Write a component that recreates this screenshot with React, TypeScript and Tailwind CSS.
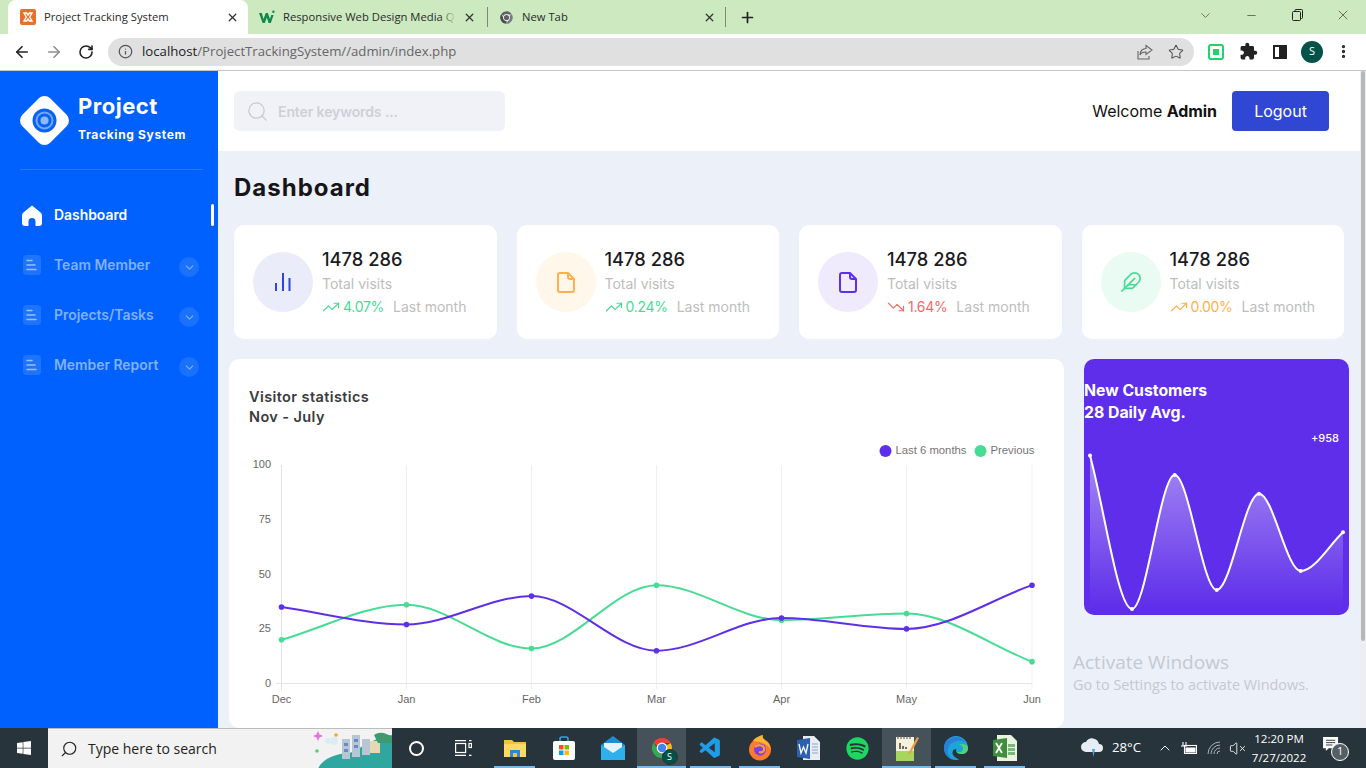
import React from "react";
import { ArrowLeft, ArrowRight, RotateCw, Info, Star, Plus, X, ChevronDown, Minus, TrendingUp, TrendingDown, Feather, EllipsisVertical, ChevronUp, VolumeX, Search } from "lucide-react";
import { MdExtension } from "react-icons/md";
import { FaSpotify, FaWindows } from "react-icons/fa";
import { VscVscode } from "react-icons/vsc";

type P = [number, number];

function monotonePath(pts: P[]) {
  const n = pts.length;
  const d: number[] = [];
  for (let i = 0; i < n - 1; i++) d.push((pts[i + 1][1] - pts[i][1]) / (pts[i + 1][0] - pts[i][0]));
  const m: number[] = pts.map((_, i) => {
    if (i === 0) return d[0];
    if (i === n - 1) return d[n - 2];
    return d[i - 1] * d[i] <= 0 ? 0 : (d[i - 1] + d[i]) / 2;
  });
  for (let i = 0; i < n - 1; i++) {
    if (d[i] === 0) continue;
    const a = m[i] / d[i];
    const b = m[i + 1] / d[i];
    const s = a * a + b * b;
    if (s > 9) {
      const t = 3 / Math.sqrt(s);
      m[i] = a * t * d[i];
      m[i + 1] = b * t * d[i];
    }
  }
  let path = `M${pts[0][0]} ${pts[0][1]}`;
  for (let i = 0; i < n - 1; i++) {
    const h = (pts[i + 1][0] - pts[i][0]) / 3;
    path += ` C${pts[i][0] + h} ${pts[i][1] + m[i] * h} ${pts[i + 1][0] - h} ${pts[i + 1][1] - m[i + 1] * h} ${pts[i + 1][0]} ${pts[i + 1][1]}`;
  }
  return path;
}

const INTER = "font-['Inter',sans-serif]";
const SEGOE = "font-['Open_Sans',sans-serif]";

function ChromeLogo({ size = 16, gray = false }: { size?: number; gray?: boolean }) {
  const c = gray ? ["#5f6368", "#77797c", "#4a4c50"] : ["#ea4335", "#fbbc05", "#34a853"];
  return (
    <svg width={size} height={size} viewBox="0 0 24 24">
      <path d="M12 2a10 10 0 0 1 8.66 5H12a5 5 0 0 0-4.6 3L3.6 6.5A10 10 0 0 1 12 2z" fill={c[0]} />
      <path d="M20.66 7A10 10 0 0 1 12 22l4.3-7.5A5 5 0 0 0 16.4 9.5z" fill={c[1]} />
      <path d="M12 22A10 10 0 0 1 3.6 6.5L7.9 14a5 5 0 0 0 4.1 3z" fill={c[2]} />
      <circle cx="12" cy="12" r="5.4" fill="#fff" />
      <circle cx="12" cy="12" r="4.2" fill={gray ? "#5f6368" : "#4285f4"} />
    </svg>
  );
}

function TabStrip() {
  return (
    <div className={`h-[34px] bg-[#cce9bf] flex items-end text-[#2a2a2a] ${SEGOE}`}>
      <div className="ml-2 w-[240px] h-[34px] bg-white rounded-t-lg flex items-center pl-3 pr-[9px]">
        <svg width="16" height="16" viewBox="0 0 16 16" className="shrink-0">
          <rect width="16" height="16" rx="2" fill="#e8702a" />
          <path d="M4 4h2.6l1.4 2 1.4-2H12L9.7 8 12 12H9.4L8 10l-1.4 2H4l2.3-4z" fill="none" stroke="#fff" strokeWidth="1.4" />
        </svg>
        <span className="ml-2 text-[11.25px] flex-1 whitespace-nowrap">Project Tracking System</span>
        <X size={13} strokeWidth={2.4} className="text-[#333]" />
      </div>
      <div className="w-[239px] h-[34px] flex items-center pl-[11px] pr-[11px]">
        <svg width="16" height="14" viewBox="0 0 16 14" className="shrink-0">
          <path d="M0 3h2.8l1.7 6L6.8 3h2l2.2 6 1.2-4h2.4L11.8 13H9.6L7.8 7.6 5.8 13H3.6z" fill="#0c8a4a" />
          <circle cx="14.4" cy="1.8" r="1.2" fill="#0c8a4a" />
        </svg>
        <span className="relative ml-2 text-[11.25px] flex-1 whitespace-nowrap">
          Responsive Web Design Media Q
          <span className="absolute right-[2px] top-0 bottom-0 w-4 bg-gradient-to-r from-transparent to-[#cce9bf]" />
        </span>
        <X size={13} strokeWidth={2.4} className="ml-[5px] text-[#333] shrink-0" />
      </div>
      <div className="self-center w-px h-[20px] bg-[#7c8a78]" />
      <div className="w-[237px] h-[34px] flex items-center pl-[11px] pr-[9px]">
        <ChromeLogo size={15} gray />
        <span className="ml-2 text-[11.25px] flex-1">New Tab</span>
        <X size={13} strokeWidth={2.4} className="text-[#333]" />
      </div>
      <div className="self-center w-px h-[20px] bg-[#7c8a78]" />
      <div className="h-[34px] w-[42px] flex items-center justify-center">
        <Plus size={17} strokeWidth={2.4} className="text-[#222]" />
      </div>
      <div className="ml-auto h-[34px] flex items-start text-[#333]">
        <div className="w-[46px] h-[30px] flex items-center justify-center"><ChevronDown size={15} strokeWidth={1} /></div>
        <div className="w-[46px] h-[30px] flex items-center justify-center"><Minus size={13} strokeWidth={1.2} /></div>
        <div className="w-[46px] h-[30px] flex items-center justify-center">
          <svg width="11" height="12" viewBox="0 0 11 12" fill="none" stroke="#222" strokeWidth="1"><rect x="0.5" y="2.5" width="8" height="9" rx="1" /><path d="M3 2.5V1.5a1 1 0 0 1 1-1h5.5a1 1 0 0 1 1 1v7a1 1 0 0 1-1 1h-1" /></svg>
        </div>
        <div className="w-[46px] h-[30px] flex items-center justify-center"><X size={16} strokeWidth={1} /></div>
      </div>
    </div>
  );
}

function Toolbar() {
  return (
    <div className={`h-[37px] bg-white border-b border-[#c6c6c6] flex items-center ${SEGOE} pb-[1px]`}>
      <div className="w-[108px] flex items-center shrink-0 pl-[13px] text-[#222]">
        <ArrowLeft size={18} strokeWidth={2.2} />
        <ArrowRight size={18} strokeWidth={2.2} className="ml-[14px] text-[#8e8e8e]" />
        <RotateCw size={16} strokeWidth={2.4} className="ml-[15px]" />
      </div>
      <div className="w-[1086px] h-[28px] bg-[#e0e0e0] rounded-full flex items-center pl-[10px] pr-[9px]">
        <Info size={15} strokeWidth={2} className="text-[#555]" />
        <span className="ml-[9px] text-[13.2px] text-[#666]"><span className="text-[#222]">localhost</span>/ProjectTrackingSystem//admin/index.php</span>
        <svg width="16" height="16" viewBox="0 0 16 16" fill="none" stroke="#666" strokeWidth="1.1" className="ml-auto mr-[15px]"><path d="M1 7v8h11v-3" /><path d="M9 1.5l6 4.5-6 4.5V8C6 8 4 9 3 11c0-4 2.5-6.5 6-6.500z" /></svg>
        <Star size={16} strokeWidth={1.6} className="text-[#555] mr-[1px]" />
      </div>
      <div className="flex items-center pl-[14px]">
        <div className="w-4 h-4 rounded-[3px] border-2 border-[#22d36b] flex items-center justify-center"><div className="w-1.5 h-1.5 bg-[#22d36b]" /></div>
        <MdExtension size={19} className="ml-[15px] text-[#222]" />
        <div className="ml-[15px] w-[14px] h-[14px] border-2 border-[#222] flex justify-end"><div className="w-[6px] h-full bg-[#222]" /></div>
        <div className="ml-[14px] w-[22px] h-[22px] rounded-full bg-[#03524a] text-white text-[11px] flex items-center justify-center">S</div>
        <EllipsisVertical size={17} strokeWidth={2.6} className="ml-[12px] text-[#222]" />
      </div>
    </div>
  );
}

function NavItem({ label, active }: { label: string; active?: boolean }) {
  return (
    <div className="relative h-[50px] flex items-center pl-[22px]">
      {active ? (
        <svg width="20" height="21" viewBox="0 0 20 21"><path d="M10 .5 L18.600 7.500 Q20 8.600 20 10.500 V18 Q20 21 17 21 H13.500 V16.500 Q13.500 13 10 13 Q6.500 13 6.500 16.500 V21 H3 Q0 21 0 18 V10.500 Q0 8.600 1.400 7.500 Z" fill="#fff" /></svg>
      ) : (
        <svg width="20" height="20" viewBox="0 0 20 20" className="mt-[-1px]">
          <rect x="1" width="18" height="20" rx="3.500" fill="#fff" fillOpacity="0.12" />
          <path d="M5 5.500h5M5 10h8M5 14.500h9" stroke="#fff" strokeOpacity="0.55" strokeWidth="1.500" strokeLinecap="round" />
        </svg>
      )}
      <span className={`ml-3 text-[13.9px] leading-5 font-semibold whitespace-nowrap ${active ? "text-white" : "text-[#80b0ff]"}`}>{label}</span>
      {active ? (
        <div className="absolute right-[4px] top-[14px] w-[3px] h-[22px] bg-white rounded-sm" />
      ) : (
        <div className="absolute left-[179px] top-[17px] w-5 h-5 rounded-full bg-white/10 flex items-center justify-center">
          <ChevronDown size={13} strokeWidth={2} className="text-[#80b0ff]" />
        </div>
      )}
    </div>
  );
}

function Sidebar() {
  return (
    <aside className={`w-[218px] shrink-0 bg-[#0061fe] ${INTER}`}>
      <div className="mx-5 mr-[15px] h-[99px] border-b border-white/15 flex items-start pt-[25px]">
        <svg width="49" height="49" viewBox="0 0 49 49" className="shrink-0">
          <rect x="4.850" y="4.850" width="39.300" height="39.300" rx="8" transform="rotate(45 24.500 24.500)" fill="#fff" />
          <circle cx="24.500" cy="24.500" r="12" fill="#0a62f5" />
          <circle cx="24.500" cy="24.500" r="9" fill="#fff" fillOpacity="0.45" />
          <circle cx="24.500" cy="24.500" r="7" fill="#0a62f5" />
          <circle cx="24.500" cy="24.500" r="4" fill="#8fb9ff" />
        </svg>
        <div className="ml-[9px] text-white font-bold">
          <div className="text-[22px] leading-[22px] mt-[-1px] tracking-[0.5px]">Project</div>
          <div className="text-[12px] leading-4 mt-[10px] tracking-[0.65px] whitespace-nowrap">Tracking System</div>
        </div>
      </div>
      <nav className="mt-5">
        <NavItem label="Dashboard" active />
        <NavItem label="Team Member" />
        <NavItem label="Projects/Tasks" />
        <NavItem label="Member Report" />
      </nav>
    </aside>
  );
}

function FileIcon({ color }: { color: string }) {
  return (
    <svg width="18" height="21" viewBox="0 0 18 21" fill="none" stroke={color} strokeWidth="2" strokeLinejoin="round" className="mt-[1px]">
      <path d="M3 1H11l6 6v11a2 2 0 0 1-2 2H3a2 2 0 0 1-2-2V3a2 2 0 0 1 2-2z" />
      <path d="M11 1v4a2 2 0 0 0 2 2h4" />
    </svg>
  );
}

function StatCard({ circle, icon, pct, pctColor, down }: { circle: string; icon: React.ReactNode; pct: string; pctColor: string; down?: boolean }) {
  const Trend = down ? TrendingDown : TrendingUp;
  return (
    <div className="bg-white rounded-[10px] h-[114px] flex pl-[19px] pt-[27px]">
      <div className={`w-[60px] h-[60px] rounded-full flex items-center justify-center shrink-0 ${circle}`}>{icon}</div>
      <div className="ml-[9px] mt-[-5px]">
        <div className="text-[18.300px] leading-6 font-medium text-[#1b1b1f] whitespace-nowrap">1478 286</div>
        <div className="text-[14px] leading-5 mt-[3px] text-[#bdbdbd]">Total visits</div>
        <div className="flex items-center text-[14px] leading-5 mt-[3px] whitespace-nowrap">
          <Trend size={18} strokeWidth={1.600} style={{ color: pctColor }} />
          <span className="ml-[3px] tracking-[-0.3px]" style={{ color: pctColor }}>{pct}</span>
          <span className="ml-[9px] text-[#bdbdbd]">Last month</span>
        </div>
      </div>
    </div>
  );
}

const XS = [281.5, 406.5, 531.5, 656.5, 781.5, 906.5, 1032];
const YAT = (v: number) => 683.5 - v * 2.185;

function LineChart() {
  const purple = [35, 27, 40, 15, 30, 25, 45].map((v, i) => [XS[i], YAT(v)] as P);
  const green = [20, 36, 16, 45, 29, 32, 10].map((v, i) => [XS[i], YAT(v)] as P);
  const labels = ["Dec", "Jan", "Feb", "Mar", "Apr", "May", "Jun"];
  return (
    <svg width="835" height="301" viewBox="229 427 835 301" className="block" fontFamily="'Liberation Sans', sans-serif" fontSize="11">
      <circle cx="885.500" cy="451" r="6" fill="#5f2eea" />
      <text x="895.500" y="454" fill="#757575" fontSize="11.300">Last 6 months</text>
      <circle cx="980.500" cy="451" r="6" fill="#47dc94" />
      <text x="990.500" y="454" fill="#757575" fontSize="11.300">Previous</text>
      {XS.map((x, i) => (
        <line key={x} x1={x} x2={x} y1="465" y2={i === 0 ? 690 : 689} stroke={i === 0 ? "#e2e2e2" : "#efefef"} strokeWidth="1" />
      ))}
      <line x1="276" x2="1032" y1="683.500" y2="683.500" stroke="#e4e4e4" />
      {[100, 75, 50, 25, 0].map((v, i) => (
        <text key={v} x="271" y={468 + i * 54.800} textAnchor="end" fill="#666">{v}</text>
      ))}
      {labels.map((l, i) => (
        <text key={l} x={XS[i]} y="703" textAnchor="middle" fill="#666">{l}</text>
      ))}
      <path d={monotonePath(green)} fill="none" stroke="#47dc94" strokeWidth="2" />
      {green.map((p) => <circle key={p[0]} cx={p[0]} cy={p[1]} r="2.800" fill="#47dc94" />)}
      <path d={monotonePath(purple)} fill="none" stroke="#5f2eea" strokeWidth="2" />
      {purple.map((p) => <circle key={p[0]} cx={p[0]} cy={p[1]} r="2.800" fill="#5f2eea" />)}
    </svg>
  );
}

function SparkChart() {
  const pts: P[] = [[1090, 455.5], [1132, 609], [1174.7, 475], [1216.7, 590], [1259, 493.7], [1300.7, 571], [1343, 532.3]];
  const line = monotonePath(pts);
  return (
    <svg width="265" height="169" viewBox="1084 446 265 169" className="block">
      <defs>
        <linearGradient id="sparkFill" gradientUnits="userSpaceOnUse" x1="0" y1="455" x2="0" y2="608">
          <stop offset="0" stopColor="#fff" stopOpacity="0.44" />
          <stop offset="1" stopColor="#fff" stopOpacity="0" />
        </linearGradient>
      </defs>
      <path d={`${line} L1343 609 L1090 609 Z`} fill="url(#sparkFill)" />
      <path d={line} fill="none" stroke="#fff" strokeWidth="2" />
      {pts.map((p) => <circle key={p[0]} cx={p[0]} cy={p[1]} r="2" fill="#fff" />)}
    </svg>
  );
}

function Main() {
  return (
    <div className={`relative w-[1142px] shrink-0 flex flex-col bg-[#ecf0f9] ${INTER} overflow-hidden`}>
      <header className="h-[80px] bg-white flex items-center px-4 shrink-0">
        <div className="w-[271px] h-10 bg-[#f0f2f7] rounded-md flex items-center pl-3">
          <Search size={23} strokeWidth={1.300} className="text-[#c6cad2]" />
          <span className="ml-[9px] text-[14px] tracking-[-0.1px] font-semibold text-[#cdd0d6]">Enter keywords ...</span>
        </div>
        <div className="ml-auto text-[16px] tracking-[-0.05px] text-[#111]">Welcome <span className="font-bold">Admin</span></div>
        <div className="ml-[15px] mr-[15px] w-[97px] h-10 bg-[#3047d3] rounded text-white text-[16px] flex items-center justify-center">Logout</div>
      </header>
      <div className="px-4 flex-1">
        <h1 className="text-[24px] leading-8 font-bold text-[#16161a] tracking-[1px] pt-[21px] pb-[21px] box-content">Dashboard</h1>
        <div className="grid grid-cols-4 gap-5">
          <StatCard
            circle="bg-[#eaedf9]"
            pct="4.07%"
            pctColor="#47dc94"
            icon={
              <svg width="16" height="18" viewBox="0 0 16 18" stroke="#2f46d6" strokeWidth="2"><path d="M1 18V10M8 18V0M14.500 18V5" /></svg>
            }
          />
          <StatCard circle="bg-[#fff7ea]" pct="0.24%" pctColor="#47dc94" icon={<FileIcon color="#ffb04a" />} />
          <StatCard circle="bg-[#efebfd]" pct="1.64%" pctColor="#f46a6a" down icon={<FileIcon color="#5f2eea" />} />
          <StatCard circle="bg-[#e9fbf3]" pct="0.00%" pctColor="#ffb04a" icon={<Feather size={22} strokeWidth={1.800} color="#47dc94" />} />
        </div>
        <div className="flex gap-5 mt-5 ml-[-5px] items-start">
          <div className="w-[835px] h-[369px] bg-white rounded-[10px] shrink-0">
            <div className="pl-5 pt-7 text-[14.500px] leading-5 font-semibold text-[#3a3a3e] tracking-[0.4px]">
              <div>Visitor statistics</div>
              <div>Nov - July</div>
            </div>
            <LineChart />
          </div>
          <div className="w-[265px] h-[256px] bg-[#5f2eea] rounded-[10px] shrink-0 pt-[21px] text-white overflow-hidden">
            <div className="text-[15.800px] leading-[22px] font-bold whitespace-nowrap">
              <div>New Customers</div>
              <div>28 Daily Avg.</div>
            </div>
            <div className="mt-[6px] pr-[10px] text-right text-[11px] leading-4 font-medium">+958</div>
            <SparkChart />
          </div>
        </div>
      </div>
      <div className={`absolute left-[855px] top-[579px] text-[#c5c9d0] ${SEGOE} whitespace-nowrap`}>
        <div className="text-[19px] leading-[24px]">Activate Windows</div>
        <div className="text-[14.400px] leading-5 mt-[1px]">Go to Settings to activate Windows.</div>
      </div>
    </div>
  );
}

function Scrollbar() {
  return (
    <div className="w-[6px] shrink-0 bg-[#eceef3]">
      <div className="h-[570px] bg-[#b7b7b7] rounded-full mx-[1px]" />
    </div>
  );
}

const T = ({ active, on, children }: { active?: boolean; on?: boolean; children?: React.ReactNode }) => (
  <div className={`relative w-[49px] h-10 flex items-center justify-center shrink-0 ${on ? "bg-[#46525a]" : ""}`}>
    {children}
    {active && <div className={`absolute bottom-0 h-[2px] bg-[#76b9ed] ${on ? "inset-x-0" : "inset-x-1"}`} />}
  </div>
);

function Taskbar() {
  return (
    <div className={`h-10 bg-[#28343c] flex items-center text-white ${SEGOE}`}>
      <div className="w-[48px] flex justify-center shrink-0"><FaWindows size={16} /></div>
      <div className="relative w-[344px] h-10 bg-[#f2f2f2] flex items-center pl-[12px] text-[#222] overflow-hidden shrink-0 border-t border-[#bdbdbd]">
        <Search size={18} strokeWidth={1.500} className="-scale-x-100" />
        <span className="ml-[10px] text-[14px] whitespace-nowrap">Type here to search</span>
        <svg width="80" height="40" viewBox="0 0 80 40" className="absolute right-0 top-0">
          <path d="M6 40C10 30 24 24 38 24C50 18 64 8 80 6V40Z" fill="#2fa7a0" />
          <path d="M30 10h8v20h-8zM40 6h8v22h-8zM50 10h8v16h-8z" fill="#b6c6d2" />
          <path d="M42 10h4v3h-4zM42 16h4v3h-4zM32 14h4v3h-4zM32 20h4v3h-4z" fill="#6f87c9" />
          <path d="M58 12h10v12H58z" fill="#e5d9b0" />
          <path d="M62 6C68 2 74 4 80 8V14H66z" fill="#3f9a70" />
          <circle cx="16" cy="12" r="3" fill="#dcecf5" /><circle cx="22" cy="12" r="4" fill="#dcecf5" />
          <path d="M6 2l1.500 3.500L11 7 7.500 8.500 6 12 4.500 8.500 1 7l3.500-1.500z" fill="#e472e0" />
          <circle cx="24" cy="6" r="1.800" fill="#f5a623" />
          <circle cx="5" cy="22" r="1.800" fill="#4fd07a" />
        </svg>
      </div>
      <T>
        <div className="w-[15px] h-[15px] rounded-full border-2 border-white" />
      </T>
      <T>
        <svg width="17" height="16" viewBox="0 0 17 16" fill="none" stroke="#fff" strokeWidth="1.200" className="mr-1"><path d="M0 .6h11M0 15.400h11" /><rect x=".6" y="3.500" width="10" height="9" /><path d="M14 .6h2.500M14 15.400h2.500" /><rect x="14" y="3.500" width="2.500" height="4" /></svg>
      </T>
      <T active>
        <svg width="22" height="20" viewBox="0 0 22 20"><path d="M0 2h8l2 2h12v15H0z" fill="#f0c33c" /><path d="M0 6h22v13H0z" fill="#ffd966" /><path d="M6 12h10v7H6z" fill="#2b88d8" /><path d="M9 15h4v4H9z" fill="#f0c33c" /></svg>
      </T>
      <T>
        <svg width="22" height="24" viewBox="0 0 22 24"><path d="M7 6V3a2 2 0 0 1 2-2h4a2 2 0 0 1 2 2v3" fill="none" stroke="#2ea7e0" strokeWidth="1.600" /><rect y="5" width="22" height="19" rx="2" fill="#fff" /><path d="M6 9h4.500v4.500H6z" fill="#f25022" /><path d="M11.500 9H16v4.500h-4.500z" fill="#7fba00" /><path d="M6 14.500h4.500V19H6z" fill="#00a4ef" /><path d="M11.500 14.500H16V19h-4.500z" fill="#ffb900" /></svg>
      </T>
      <T>
        <svg width="24" height="24" viewBox="0 0 24 24"><path d="M0 9L12 0l12 9v15H0z" fill="#1a8fd8" /><path d="M3 7h18v6l-9 6-9-6z" fill="#e4f3fc" /><path d="M0 9l12 8 12-8v15H0z" fill="#2eb0ee" /></svg>
      </T>
      <T active on>
        <div className="relative">
          <ChromeLogo size={24} />
          <div className="absolute -right-[4px] -bottom-[5px] w-4 h-4 rounded-full bg-[#03524a] border border-[#28343c] text-[9px] flex items-center justify-center">S</div>
        </div>
      </T>
      <T active><VscVscode size={25} color="#1f9ce8" /></T>
      <T active>
        <svg width="24" height="26" viewBox="0 0 24 26"><circle cx="12" cy="14.500" r="11" fill="#ff7a2f" /><path d="M5 6C8 1 15 0 15 0c-1 3 1 4 4 7s4 8 4 8c-3-6-8-7-11-8z" fill="#ffb733" /><circle cx="12" cy="14.500" r="6" fill="#7b3fe4" /><path d="M7 12c3-3 8-2 9 1s-2 5-5 4" fill="none" stroke="#ff9a3c" strokeWidth="2.200" /></svg>
      </T>
      <T>
        <svg width="23" height="24" viewBox="0 0 23 24"><path d="M6 0h11l6 6v18H6z" fill="#e8edf5" /><path d="M0 4l13-2v21L0 21z" fill="#2b5fb0" /><path d="M15 8h6M15 11h6M15 14h6M15 17h6" stroke="#8aa5cf" strokeWidth="1" /><path d="M2 8l2 9 2.500-6 2.500 6 2-9" fill="none" stroke="#fff" strokeWidth="1.300" /></svg>
      </T>
      <T><FaSpotify size={23} color="#1ed760" /></T>
      <T active on>
        <svg width="24" height="26" viewBox="0 0 24 26"><rect x="1" y="2" width="18" height="24" fill="#a6d65e" /><rect x="1" y="2" width="18" height="14" fill="#f5f1dc" /><path d="M3 0v4M6 0v4M9 0v4M12 0v4M15 0v4" stroke="#555" /><path d="M5 14V8M8 14v-3M11 14v-2" stroke="#333" strokeWidth="1.400" /><path d="M22 2L14 17l-1 3 3-2L24 3z" fill="#e8a33c" /></svg>
      </T>
      <T active>
        <svg width="24" height="24" viewBox="0 0 24 24"><path d="M12 0a12 12 0 0 1 12 12c0 4-3 6-6.500 6s-5.500-1.500-5.500-3.500c0-1 .5-1.500.5-1.500-3-.5-4 2-4 4 0 2.500 3 5 7 6.500A12 12 0 0 1 12 24 12 12 0 0 1 12 0z" fill="#1aa6d8" /><path d="M0 12C0 5 6 1 12 1c5 0 9 3 10 6-2-2-5-3-9-2C7 6 3 10 4 17c.300 2 2 5 5 6.500C4 22 0 18 0 12z" fill="#2b7fd8" /><path d="M24 12c0 4-3 6-6.500 6-3 0-4.500-1-5-2.500 3 1.500 6 .5 6.500-2.500.3-2-1-4-4-5 5-.5 9 1 9 4z" fill="#52d17a" /></svg>
      </T>
      <T active>
        <svg width="24" height="26" viewBox="0 0 24 26"><path d="M4 0h14l6 6v20H4z" fill="#e8f3e0" /><path d="M0 5l14-2v20L0 21z" fill="#3f8f3f" /><path d="M15 9h7v3h-7zM15 13h7v3h-7zM15 17h7v3h-7z" fill="#7ab87a" /><path d="M3 8l6 10M9 8l-6 10" stroke="#fff" strokeWidth="1.800" /></svg>
      </T>
      <div className="ml-[51px] flex items-center shrink-0">
        <svg width="24" height="24" viewBox="0 0 24 24"><path d="M6 16a5 5 0 0 1 0-10 7 7 0 0 1 13 2 4 4 0 0 1 0 8z" fill="#e6edf5" /><path d="M12 13l3 0-1.500 8z" fill="#4aa5e8" /></svg>
        <span className="ml-[8px] text-[13.200px]">28°C</span>
        <ChevronUp size={16} strokeWidth={1.400} className="ml-[16px]" />
        <svg width="16" height="12" viewBox="0 0 16 12" fill="none" stroke="#fff" strokeWidth="1.100" className="ml-[8px]"><rect x="3.500" y="3.500" width="12" height="8" /><path d="M5 6h9v4H5z" fill="#fff" /><path d="M2 0v4M5 0v3M0 4h6" /></svg>
        <svg width="16" height="14" viewBox="0 0 16 14" fill="none" stroke="#aeb4b8" strokeWidth="1" className="ml-[10px]"><path d="M1 13A12 12 0 0 1 13 1M4 13A9 9 0 0 1 13 4M7 13a6 6 0 0 1 6-6M10 13a3 3 0 0 1 3-3" /></svg>
        <VolumeX size={17} strokeWidth={1.200} className="ml-[6px]" />
        <div className="w-[66px] text-center text-[11.500px] leading-[19px] whitespace-nowrap">
          <div>12:20 PM</div>
          <div>7/27/2022</div>
        </div>
        <div className="relative ml-[11px] mt-[-8px]">
          <svg width="17" height="15" viewBox="0 0 18 16" fill="#fff" className="block"><path d="M0 0h16v12H6l-3 3v-3H0z" /><path d="M3 3.500h10M3 6h10M3 8.500h7" stroke="#28343c" /></svg>
          <div className="absolute left-[8px] top-[6px] w-[18px] h-[18px] rounded-full bg-[#555f66] border border-white text-[11px] flex items-center justify-center">1</div>
        </div>
      </div>
    </div>
  );
}

export default function App() {
  return (
    <div className="w-[1366px] h-[768px] overflow-hidden flex flex-col bg-white">
      <TabStrip />
      <Toolbar />
      <div className="h-[657px] flex overflow-hidden">
        <Sidebar />
        <Main />
        <Scrollbar />
      </div>
      <Taskbar />
    </div>
  );
}
